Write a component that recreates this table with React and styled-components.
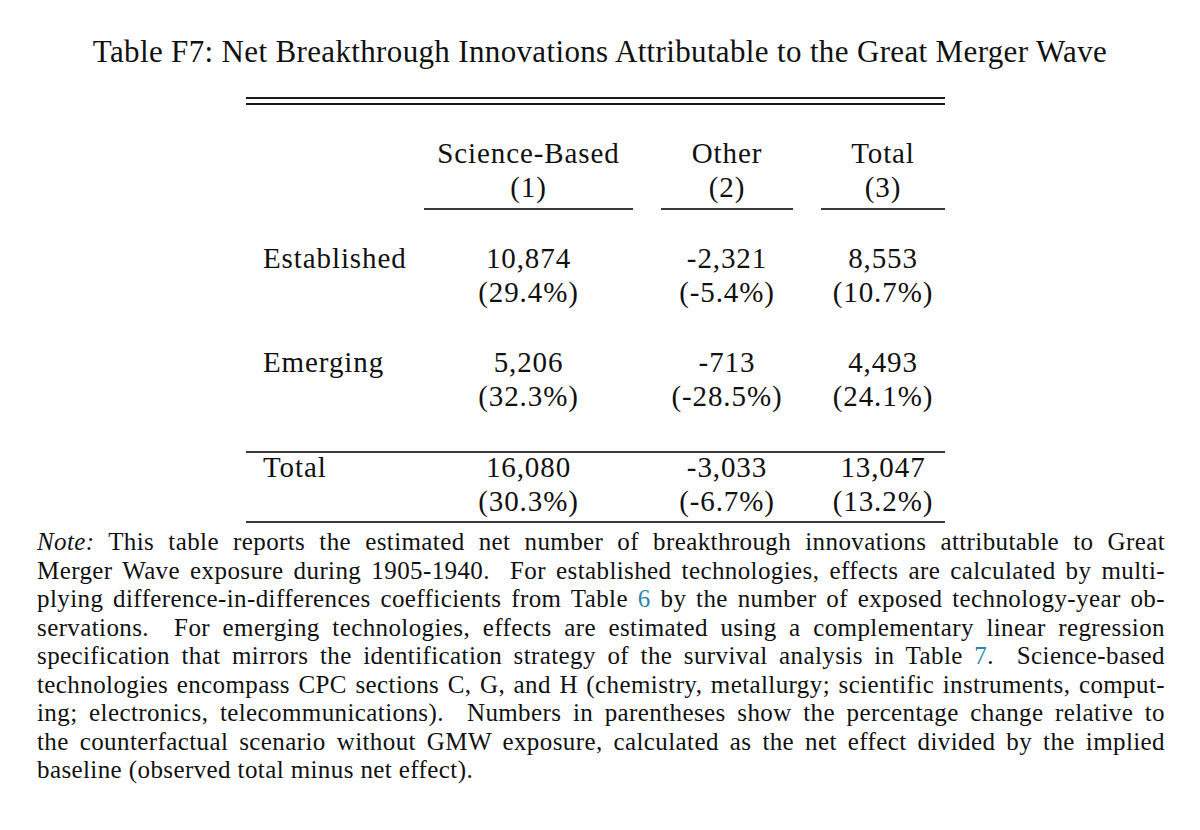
import React from "react";
import styled, { createGlobalStyle } from "styled-components";

const GlobalStyle = createGlobalStyle`
  body {
    margin: 0;
    background: #ffffff;
    color: #111111;
    font-family: "Liberation Serif", "Times New Roman", serif;
  }
`;

const columns = ["Science-Based", "Other", "Total"];

const groups = [
  { label: "Established", values: ["10,874", "-2,321", "8,553"], pct: ["(29.4%)", "(-5.4%)", "(10.7%)"] },
  { label: "Emerging", values: ["5,206", "-713", "4,493"], pct: ["(32.3%)", "(-28.5%)", "(24.1%)"] },
];

const total = { label: "Total", values: ["16,080", "-3,033", "13,047"], pct: ["(30.3%)", "(-6.7%)", "(13.2%)"] };

export default function App() {
  return (
    <Page>
      <GlobalStyle />
      <Title>Table F7: Net Breakthrough Innovations Attributable to the Great Merger Wave</Title>
      <Table>
        <DoubleRule />
        <Row $gap={31}>
          <Stub />
          {columns.map((c, i) => (
            <HeadCell key={c}>
              <Line>{c}</Line>
              <Line>({i + 1})</Line>
            </HeadCell>
          ))}
        </Row>
        {groups.map((g, gi) => (
          <Row key={g.label} $gap={gi === 0 ? 31 : 36}>
            <Stub>{g.label}</Stub>
            {g.values.map((v, i) => (
              <Cell key={i}>
                <Line>{v}</Line>
                <Line>{g.pct[i]}</Line>
              </Cell>
            ))}
          </Row>
        ))}
        <Rule $top={38} />
        <Row $gap={-3}>
          <Stub>{total.label}</Stub>
          {total.values.map((v, i) => (
            <Cell key={i}>
              <Line>{v}</Line>
              <Line>{total.pct[i]}</Line>
            </Cell>
          ))}
        </Row>
        <Rule $top={3} />
      </Table>
      <Note>
        <NoteLine>
          <em>Note:</em> This table reports the estimated net number of breakthrough innovations attributable to Great
        </NoteLine>
        <NoteLine>
          Merger Wave exposure during 1905-1940.&nbsp; For established technologies, effects are calculated by multi-
        </NoteLine>
        <NoteLine>
          plying difference-in-differences coefficients from Table <Ref>6</Ref> by the number of exposed technology-year ob-
        </NoteLine>
        <NoteLine>
          servations.&nbsp; For emerging technologies, effects are estimated using a complementary linear regression
        </NoteLine>
        <NoteLine>
          specification that mirrors the identification strategy of the survival analysis in Table <Ref>7</Ref>.&nbsp; Science-based
        </NoteLine>
        <NoteLine>
          technologies encompass CPC sections C, G, and H (chemistry, metallurgy; scientific instruments, comput-
        </NoteLine>
        <NoteLine>
          ing; electronics, telecommunications).&nbsp; Numbers in parentheses show the percentage change relative to
        </NoteLine>
        <NoteLine>
          the counterfactual scenario without GMW exposure, calculated as the net effect divided by the implied
        </NoteLine>
        <NoteLine $last>baseline (observed total minus net effect).</NoteLine>
      </Note>
    </Page>
  );
}

const Page = styled.div`
  width: 1200px;
  min-height: 830px;
  padding-top: 34px;
  box-sizing: border-box;
`;

const Title = styled.h1`
  margin: 0;
  font-weight: normal;
  font-size: 31px;
  line-height: 36px;
  letter-spacing: 0.35px;
  text-align: center;
`;

const Table = styled.div`
  width: 699px;
  margin: 27px 0 0 246px;
  font-size: 29px;
  line-height: 34px;
  letter-spacing: 0.9px;
`;

const DoubleRule = styled.div`
  height: 4px;
  border-top: 2px solid #1a1a1a;
  border-bottom: 2px solid #1a1a1a;
`;

const Rule = styled.div`
  margin-top: ${(p) => p.$top}px;
  border-top: 2px solid #3a3a3a;
`;

const Row = styled.div`
  display: grid;
  grid-template-columns: 150px 209px 132px 124px;
  column-gap: 28px;
  margin-top: ${(p) => p.$gap}px;
`;

const Stub = styled.div`
  padding-left: 17px;
  white-space: nowrap;
`;

const Cell = styled.div`
  text-align: center;
  white-space: nowrap;
`;

const HeadCell = styled(Cell)`
  padding-bottom: 4px;
  border-bottom: 2px solid #3a3a3a;
`;

const Line = styled.div``;

const Note = styled.div`
  width: 1128px;
  margin: 5px 0 0 37px;
  font-size: 25px;
  line-height: 28.5px;
  letter-spacing: 0.4px;

  em {
    font-style: italic;
  }
`;

const NoteLine = styled.div`
  text-align: justify;
  text-align-last: ${(p) => (p.$last ? "left" : "justify")};
  white-space: nowrap;
`;

const Ref = styled.span`
  color: #2a86aa;
`;
